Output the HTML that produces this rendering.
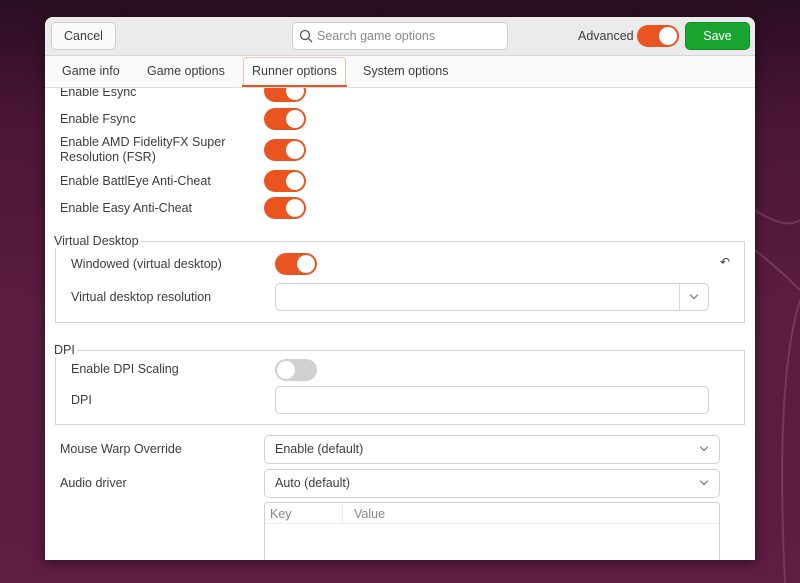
<!DOCTYPE html>
<html><head><meta charset="utf-8"><style>
*{box-sizing:border-box;margin:0;padding:0}
body{width:800px;height:583px;overflow:hidden;position:relative;font-family:"Liberation Sans",sans-serif;font-size:12.5px;color:#3d3d3d;
background:linear-gradient(180deg,#2a0d22 0px,#4a1636 120px,#5a1c40 300px,#5e1d42 583px)}
.a{position:absolute}
.win{left:45px;top:17px;width:710px;height:543px;background:#fff;border-radius:8px 8px 0 0;overflow:hidden;box-shadow:0 2px 12px rgba(0,0,0,.5)}
.hdr{left:0;top:0;width:710px;height:39px;background:#ebebeb;border-bottom:1px solid #d6d6d6;z-index:3}
.tabs{left:0;top:39px;width:710px;height:32px;background:#fafafa;border-bottom:1px solid #dcdcdc;z-index:3}
.z{z-index:4}
.btn{border:1px solid #cfcfcf;border-radius:5px;background:#fafafa;text-align:center;line-height:26px}
.sw{width:42px;height:22px;border-radius:11px;background:#e95420}
.sw::after{content:"";position:absolute;right:2px;top:2px;width:18px;height:18px;border-radius:50%;background:#fff}
.off{background:#d0d0d0}
.off::after{left:2px;right:auto}
.inp{border:1px solid #d0d0d0;border-radius:5px;background:#fff}
.dd{border:1px solid #d0d0d0;border-radius:5px;background:#fff;line-height:27px;padding-left:10px}
.chev{position:absolute;right:12px;top:8px;width:6px;height:6px;border-right:1px solid #666;border-bottom:1px solid #666;transform:rotate(45deg)}
.box{border:1px solid #d4d4d4}
</style></head><body>
<svg class="a" style="left:755px;top:180px" width="45" height="403"><g fill="none" stroke="#8a4a6e" stroke-width="2" opacity=".6"><path d="M0 30 Q30 50 45 40"/><path d="M0 70 Q25 90 45 110"/><path d="M45 120 Q20 200 30 403"/></g></svg>
<div class="a win">
 <div class="a hdr"></div>
 <div class="a btn z" style="left:6px;top:5px;width:65px;height:28px">Cancel</div>
 <div class="a inp z" style="left:247px;top:5px;width:216px;height:28px;color:#888;line-height:26px;padding-left:24px">Search game options</div>
 <svg class="a z" style="left:254px;top:12px" width="14" height="14"><circle cx="6" cy="6" r="4.5" fill="none" stroke="#555" stroke-width="1.3"/><line x1="9.3" y1="9.3" x2="13" y2="13" stroke="#555" stroke-width="1.3"/></svg>
 <div class="a z" style="left:533px;top:12px">Advanced</div>
 <div class="a sw z" style="left:592px;top:8px"></div>
 <div class="a z" style="left:640px;top:5px;width:65px;height:28px;background:#18a42f;border:1px solid #128a25;border-radius:5px;color:#fff;text-align:center;line-height:26px">Save</div>
 <div class="a tabs"></div>
 <div class="a z" style="left:17px;top:47px">Game info</div>
 <div class="a z" style="left:102px;top:47px">Game options</div>
 <div class="a z" style="left:198px;top:40px;width:103px;height:29px;border:1px solid #f0c0ae;border-radius:4px 4px 0 0;background:#fdfdfd"></div>
 <div class="a z" style="left:197px;top:68px;width:105px;height:2px;background:#e95420"></div>
 <div class="a z" style="left:207px;top:47px">Runner options</div>
 <div class="a z" style="left:318px;top:47px">System options</div>

 <div class="a" style="left:15px;top:68px">Enable Esync</div>
 <div class="a sw" style="left:219px;top:63px"></div>
 <div class="a" style="left:15px;top:95px">Enable Fsync</div>
 <div class="a sw" style="left:219px;top:91px"></div>
 <div class="a" style="left:15px;top:118px;line-height:15px">Enable AMD FidelityFX Super<br>Resolution (FSR)</div>
 <div class="a sw" style="left:219px;top:122px"></div>
 <div class="a" style="left:15px;top:157px">Enable BattlEye Anti-Cheat</div>
 <div class="a sw" style="left:219px;top:153px"></div>
 <div class="a" style="left:15px;top:184px">Enable Easy Anti-Cheat</div>
 <div class="a sw" style="left:219px;top:180px"></div>

 <div class="a box" style="left:10px;top:224px;width:690px;height:82px"></div>
 <div class="a" style="left:9px;top:217px;background:#fff;padding-right:2px">Virtual Desktop</div>
 <div class="a" style="left:26px;top:240px">Windowed (virtual desktop)</div>
 <div class="a sw" style="left:230px;top:236px"></div>
 <div class="a" style="left:675px;top:238px;font-size:12px">↶</div>
 <div class="a" style="left:26px;top:273px">Virtual desktop resolution</div>
 <div class="a inp" style="left:230px;top:266px;width:434px;height:28px"></div>
 <div class="a" style="left:634px;top:267px;width:1px;height:26px;background:#d8d8d8"></div>
 <div class="a chev" style="left:646px;top:275px"></div>

 <div class="a box" style="left:10px;top:333px;width:690px;height:75px"></div>
 <div class="a" style="left:9px;top:326px;background:#fff;padding-right:2px">DPI</div>
 <div class="a" style="left:26px;top:345px">Enable DPI Scaling</div>
 <div class="a sw off" style="left:230px;top:342px"></div>
 <div class="a" style="left:26px;top:376px">DPI</div>
 <div class="a inp" style="left:230px;top:369px;width:434px;height:28px"></div>

 <div class="a" style="left:15px;top:425px">Mouse Warp Override</div>
 <div class="a dd" style="left:219px;top:418px;width:456px;height:29px">Enable (default)<span class="chev"></span></div>
 <div class="a" style="left:15px;top:459px">Audio driver</div>
 <div class="a dd" style="left:219px;top:452px;width:456px;height:29px">Auto (default)<span class="chev"></span></div>
 <div class="a" style="left:219px;top:485px;width:456px;height:70px;border:1px solid #d0d0d0;border-radius:3px"></div>
 <div class="a" style="left:220px;top:506px;width:454px;height:1px;background:#f0f0f0"></div>
 <div class="a" style="left:225px;top:490px;color:#888">Key</div>
 <div class="a" style="left:309px;top:490px;color:#888">Value</div>
 <div class="a" style="left:297px;top:487px;width:1px;height:20px;background:#eee"></div>
</div>
</body></html>
